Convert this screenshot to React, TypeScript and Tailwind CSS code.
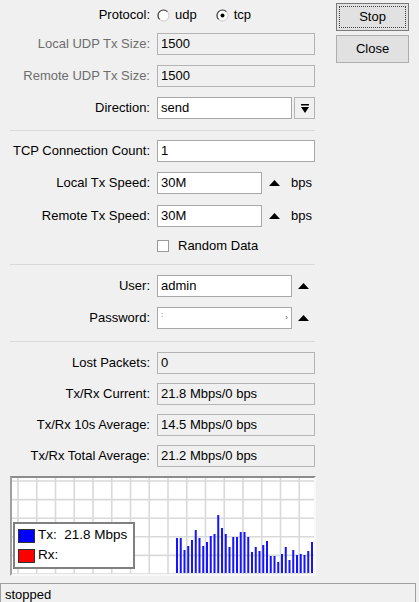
const bars = [
  35, 35, 23, 27, 33, 43, 35, 27, 31, 37, 39, 58, 45, 39, 26, 36, 36, 41, 41,
  36, 21, 26, 22, 28, 32, 17, 17, 11, 19, 26, 13, 23, 18, 19, 18, 22, 31,
];

const Radio = ({ checked }: { checked?: boolean }) => (
  <svg width="13" height="13" viewBox="0 0 13 13">
    <circle cx="6.5" cy="6.5" r="5.5" fill="#fff" stroke="#c8c8c8" />
    <path d="M2.6 10.4 A5.5 5.5 0 0 1 10.4 2.6" fill="none" stroke="#404040" strokeWidth="1.2" />
    {checked && <circle cx="6.5" cy="6.5" r="2" fill="#000" />}
  </svg>
);

const UpArrow = () => (
  <svg width="11" height="6" viewBox="0 0 11 6">
    <polygon points="0,6 11,6 5.5,0" fill="#000" />
  </svg>
);

const Field = ({
  value,
  w,
  readOnly,
}: {
  value: string;
  w: string;
  readOnly?: boolean;
}) => (
  <div
    className={`h-[22px] ${w} border ${
      readOnly ? "bg-[#f0f0f0] border-[#b4b4b4]" : "bg-white border-[#a8a8a8]"
    } pl-[3px] leading-[20px] text-black whitespace-nowrap overflow-hidden`}
  >
    {value}
  </div>
);

const Row = ({
  label,
  mt,
  dim,
  children,
}: {
  label: string;
  mt: string;
  dim?: boolean;
  children: React.ReactNode;
}) => (
  <div className={`flex items-center h-[22px] ${mt}`}>
    <span
      className={`w-[140px] text-right whitespace-nowrap ${
        dim ? "text-[#6d6d6d]" : "text-black"
      }`}
    >
      {label}
    </span>
    <div className="ml-[7px] flex items-center">{children}</div>
  </div>
);

const Sep = ({ mt }: { mt: string }) => (
  <div className={`h-px w-[305px] bg-[#d9d9d9] ${mt}`} />
);

export default function App() {
  return (
    <div className="w-[419px] h-[602px] bg-[#f0f0f0] overflow-hidden flex flex-col font-['Liberation_Sans',Arial,sans-serif] text-[13px] text-black">
      <div className="flex">
        {/* form column */}
        <div className="w-[316px] pl-[10px] pt-[4px] flex flex-col">
          <Row label="Protocol:" mt="mt-0">
            <div className="flex items-center gap-[5px]">
              <Radio />
              <span>udp</span>
              <span className="w-[9px]" />
              <Radio checked />
              <span>tcp</span>
            </div>
          </Row>
          <Row label="Local UDP Tx Size:" mt="mt-[7px]" dim>
            <Field value="1500" w="w-[158px]" readOnly />
          </Row>
          <Row label="Remote UDP Tx Size:" mt="mt-[10px]" dim>
            <Field value="1500" w="w-[158px]" readOnly />
          </Row>
          <Row label="Direction:" mt="mt-[10px]">
            <Field value="send" w="w-[135px]" />
            <div className="ml-[2px] w-[21px] h-[22px] border border-[#b4b4b4] bg-[#f0f0f0] flex items-center justify-center">
              <svg width="8" height="9" viewBox="0 0 8 9">
                <rect x="0" y="0" width="8" height="1.5" fill="#000" />
                <polygon points="0,3 8,3 4,9" fill="#000" />
              </svg>
            </div>
          </Row>

          <Sep mt="mt-[11px]" />

          <Row label="TCP Connection Count:" mt="mt-[9px]">
            <Field value="1" w="w-[158px]" />
          </Row>
          <Row label="Local Tx Speed:" mt="mt-[10px]">
            <Field value="30M" w="w-[105px]" />
            <span className="ml-[7px]">
              <UpArrow />
            </span>
            <span className="ml-[11px]">bps</span>
          </Row>
          <Row label="Remote Tx Speed:" mt="mt-[11px]">
            <Field value="30M" w="w-[105px]" />
            <span className="ml-[7px]">
              <UpArrow />
            </span>
            <span className="ml-[11px]">bps</span>
          </Row>
          <div className="flex items-center h-[22px] mt-[8px] pl-[147px]">
            <div className="w-[12px] h-[12px] bg-white border border-[#9a9a9a]" />
            <span className="ml-[9px]">Random Data</span>
          </div>

          <Sep mt="mt-[7px]" />

          <Row label="User:" mt="mt-[10px]">
            <Field value="admin" w="w-[135px]" />
            <span className="ml-[6px]">
              <UpArrow />
            </span>
          </Row>
          <Row label="Password:" mt="mt-[10px]">
            <div className="h-[22px] w-[135px] border border-[#a8a8a8] bg-white flex items-center justify-between px-[3px] text-[8px] text-[#555]">
              <span className="-mt-[6px]">:</span>
              <span>›</span>
            </div>
            <span className="ml-[6px]">
              <UpArrow />
            </span>
          </Row>

          <Sep mt="mt-[12px]" />

          <Row label="Lost Packets:" mt="mt-[10px]">
            <Field value="0" w="w-[158px]" readOnly />
          </Row>
          <Row label="Tx/Rx Current:" mt="mt-[9px]">
            <Field value="21.8 Mbps/0 bps" w="w-[158px]" readOnly />
          </Row>
          <Row label="Tx/Rx 10s Average:" mt="mt-[9px]">
            <Field value="14.5 Mbps/0 bps" w="w-[158px]" readOnly />
          </Row>
          <Row label="Tx/Rx Total Average:" mt="mt-[9px]">
            <Field value="21.2 Mbps/0 bps" w="w-[158px]" readOnly />
          </Row>

          {/* graph */}
          <div className="relative mt-[9px] w-[306px] h-[100px] bg-white border-2 border-t-[#8c8c8c] border-l-[#a0a0a0] border-r-[#f8f8f8] border-b-[#f8f8f8]">
            <svg width="302" height="96" viewBox="0 0 302 96" className="block">
              {Array.from({ length: 16 }).map((_, k) => (
                <line
                  key={`v${k}`}
                  x1={6 + k * 18.75}
                  x2={6 + k * 18.75}
                  y1="0"
                  y2="96"
                  stroke="#d9d9d9"
                  strokeWidth="1.6"
                />
              ))}
              {Array.from({ length: 6 }).map((_, k) => (
                <line
                  key={`h${k}`}
                  x1="0"
                  x2="302"
                  y1={3 + k * 18.6}
                  y2={3 + k * 18.6}
                  stroke="#d9d9d9"
                  strokeWidth="1.6"
                />
              ))}
              {bars.map((h, i) => (
                <rect
                  key={i}
                  x={164 + i * 3.75}
                  y={95 - h}
                  width="2"
                  height={h}
                  fill="#1414ff"
                />
              ))}
            </svg>
            <div className="absolute left-[1px] top-[44px] w-[122px] h-[47px] bg-white border-2 border-[#808080] flex flex-col justify-center gap-[6px] pl-[3px]">
              <div className="flex items-center h-[14px]">
                <div className="w-[17px] h-[14px] bg-[#0000ff] border border-[#303030]" />
                <span className="ml-[3px] whitespace-pre text-[13.5px]">Tx:  21.8 Mbps</span>
              </div>
              <div className="flex items-center h-[14px]">
                <div className="w-[17px] h-[14px] bg-[#ff0000] border border-[#303030]" />
                <span className="ml-[3px] text-[13.5px]">Rx:</span>
              </div>
            </div>
          </div>
        </div>

        {/* buttons */}
        <div className="ml-[20px] w-[73px] pt-[3px] flex flex-col gap-[4px]">
          <div className="h-[28px] bg-[#e1e1e1] border border-[#7a7a7a] p-[2px]">
            <div className="h-full border border-dotted border-[#404040] flex items-center justify-center">
              Stop
            </div>
          </div>
          <div className="h-[28px] bg-[#e1e1e1] border border-[#adadad] flex items-center justify-center">
            Close
          </div>
        </div>
      </div>

      {/* status bar */}
      <div className="mt-[7px] w-[416px] h-[22px] border-t border-l border-r border-[#a0a0a0] pl-[4px] pt-[3px] leading-[16px]">
        stopped
      </div>
    </div>
  );
}
